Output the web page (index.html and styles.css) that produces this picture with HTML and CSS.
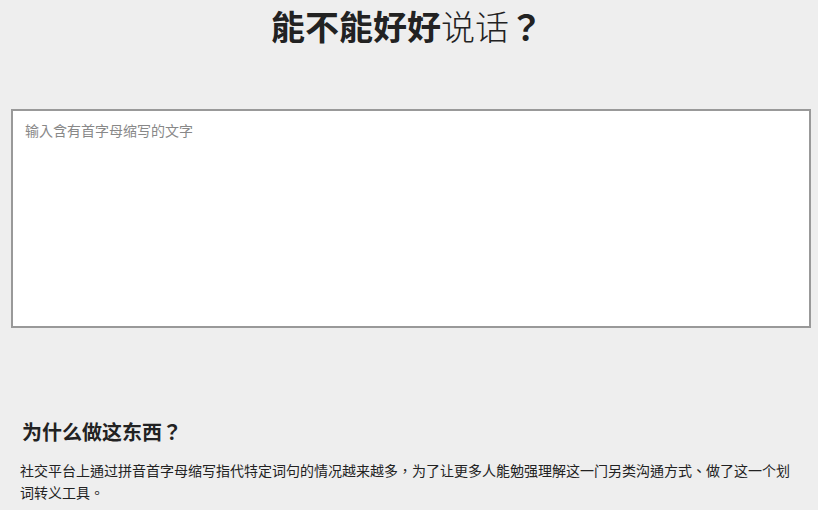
FILE: index.html
```html
<!DOCTYPE html>
<html lang="zh-TW">
<head>
    <meta charset="UTF-8">
    <title>能不能好好说话？</title>
    <link rel="stylesheet" href="styles.css">
</head>
<body>
    <h1 class="title"><b>能不能好好</b><span class="title-soft">说话</span><b>？</b></h1>

    <textarea class="input" placeholder="输入含有首字母缩写的文字"></textarea>

    <div class="about">
        <h2>为什么做这东西？</h2>
        <p>社交平台上通过拼音首字母缩写指代特定词句的情况越来越多，为了让更多人能勉强理解这一门另类沟通方式、做了这一个划词转义工具。</p>
    </div>
</body>
</html>
```

FILE: styles.css
```css
* {
    box-sizing: border-box;
}

body {
    margin: 0;
    background: #eeeeee;
    color: #222;
    font-family: "Noto Sans CJK TC", "Noto Sans CJK SC", "Noto Sans", sans-serif;
}

.title {
    margin: 6px 0 0;
    padding-right: 4px;
    font-size: 34px;
    line-height: 40px;
    text-align: center;
    font-weight: normal;
}

.title b {
    font-weight: 700;
}

.title-soft {
    font-weight: 300;
    color: #222;
}

.input {
    display: block;
    margin: 63px 0 0 11px;
    width: 800px;
    height: 219px;
    padding: 9px 12px;
    border: 2px solid #999;
    background: white;
    font-family: inherit;
    font-size: 14px;
    line-height: 20px;
    resize: none;
    outline: none;
}

.input::placeholder {
    color: #888;
}

.about {
    margin: 90px 0 0 20px;
    width: 778px;
}

.about h2 {
    margin: 0;
    padding-left: 2px;
    font-size: 20px;
    line-height: 28px;
    font-weight: 700;
}

.about p {
    margin: 13px 0 0;
    font-size: 14px;
    line-height: 22px;
}
```
